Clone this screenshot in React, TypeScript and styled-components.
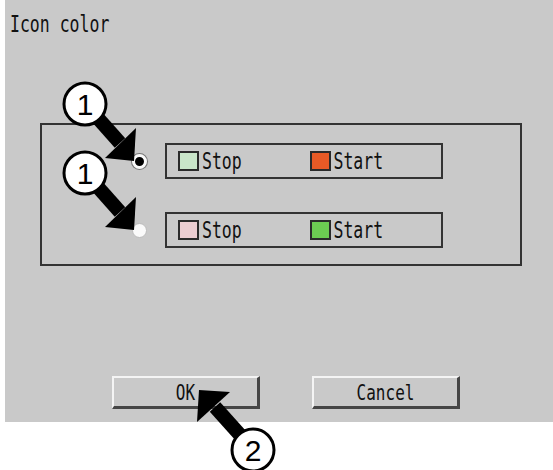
import styled, { createGlobalStyle } from "styled-components";

const GlobalStyle = createGlobalStyle`
  body {
    margin: 0;
    background: #ffffff;
  }
`;

const MONO = `"DejaVu Sans Mono", "Liberation Mono", monospace`;

export default function App() {
  return (
    <>
      <GlobalStyle />
      <Page>
        <Dialog>
          <Title>
            <Tall $scale={1.4}>Icon color</Tall>
          </Title>
          <GroupBox>
            <OptionRow>
              <Radio $checked />
              <ColorSet>
                <Item>
                  <Swatch $color="#c9e6c9" />
                  <Tall $scale={1.35}>Stop</Tall>
                </Item>
                <Item>
                  <Swatch $color="#e85a26" />
                  <Tall $scale={1.35}>Start</Tall>
                </Item>
              </ColorSet>
            </OptionRow>
            <OptionRow>
              <Radio />
              <ColorSet>
                <Item>
                  <Swatch $color="#ebcdd1" />
                  <Tall $scale={1.35}>Stop</Tall>
                </Item>
                <Item>
                  <Swatch $color="#6ccb52" />
                  <Tall $scale={1.35}>Start</Tall>
                </Item>
              </ColorSet>
            </OptionRow>
          </GroupBox>
          <ButtonRow>
            <Button>
              <Tall $scale={1.3}>OK</Tall>
            </Button>
            <Button>
              <Tall $scale={1.3}>Cancel</Tall>
            </Button>
          </ButtonRow>
        </Dialog>
        <Callouts width="553" height="470" viewBox="0 0 553 470">
          <Callout cx={85} cy={104} label="1" shaft={[88, 107, 120, 143]} head="134,161 105,158 136,128" />
          <Callout cx={85} cy={173} label="1" shaft={[88, 176, 120, 212]} head="134,230 105,227 136,197" />
          <Callout cx={253} cy={450} label="2" shaft={[250, 446, 215, 407]} head="199,390 197,422 230,392" />
        </Callouts>
      </Page>
    </>
  );
}

function Callout(props: { cx: number; cy: number; label: string; shaft: number[]; head: string }) {
  const [x1, y1, x2, y2] = props.shaft;
  return (
    <g>
      <line x1={x1} y1={y1} x2={x2} y2={y2} stroke="#000" strokeWidth={14} />
      <polygon points={props.head} fill="#000" />
      <circle cx={props.cx} cy={props.cy} r={21} fill="#fff" stroke="#000" strokeWidth={3} />
      <text
        x={props.cx}
        y={props.cy + 11}
        textAnchor="middle"
        fontFamily='"Liberation Sans", Arial, sans-serif'
        fontSize="30"
        fill="#000"
      >
        {props.label}
      </text>
    </g>
  );
}

const Page = styled.div`
  position: relative;
  width: 553px;
  height: 470px;
  overflow: hidden;
`;

const Dialog = styled.div`
  margin-left: 5px;
  height: 422px;
  background: #c9c9c9;
  display: flex;
  flex-direction: column;
  box-sizing: border-box;
  padding: 16px 0 0 5px;
`;

const Tall = styled.span<{ $scale: number }>`
  display: inline-block;
  transform: scaleY(${(p) => p.$scale});
  transform-origin: center;
  white-space: pre;
`;

const Title = styled.div`
  font-family: ${MONO};
  font-size: 16.5px;
  line-height: 18px;
  color: #111;
`;

const GroupBox = styled.div`
  margin: 89px 0 0 30px;
  width: 482px;
  height: 143px;
  box-sizing: border-box;
  border: 2px solid #333;
  padding: 18px 0 0 90px;
  display: flex;
  flex-direction: column;
  gap: 33px;
`;

const OptionRow = styled.div`
  display: flex;
  align-items: center;
  gap: 18px;
`;

const Radio = styled.span<{ $checked?: boolean }>`
  width: 15px;
  height: 15px;
  border-radius: 50%;
  box-sizing: border-box;
  background: ${(p) => (p.$checked ? "#000" : "#fafafa")};
  border: ${(p) => (p.$checked ? "3px solid #fafafa" : "1px solid #bbb")};
  box-shadow: ${(p) => (p.$checked ? "0 0 0 1px #777" : "none")};
`;

const ColorSet = styled.div`
  width: 278px;
  height: 36px;
  box-sizing: border-box;
  border: 2px solid #333;
  display: flex;
  align-items: center;
  padding-left: 11px;
`;

const Item = styled.div`
  width: 138px;
  display: flex;
  align-items: center;
  gap: 3px;
  font-family: ${MONO};
  font-size: 16.5px;
  color: #111;
`;

const Swatch = styled.span<{ $color: string }>`
  width: 21px;
  height: 20px;
  box-sizing: border-box;
  border: 2px solid #2a2a2a;
  background: ${(p) => p.$color};
`;

const ButtonRow = styled.div`
  margin: 110px 0 0 102px;
  display: flex;
  gap: 52px;
`;

const Button = styled.button`
  width: 148px;
  height: 33px;
  box-sizing: border-box;
  background: #c9c9c9;
  border-style: solid;
  border-width: 2px 3px 3px 2px;
  border-color: #f4f4f4 #454545 #454545 #f4f4f4;
  font-family: ${MONO};
  font-size: 16px;
  color: #111;
  padding: 0;
`;

const Callouts = styled.svg`
  position: absolute;
  left: 0;
  top: 0;
  pointer-events: none;
`;
